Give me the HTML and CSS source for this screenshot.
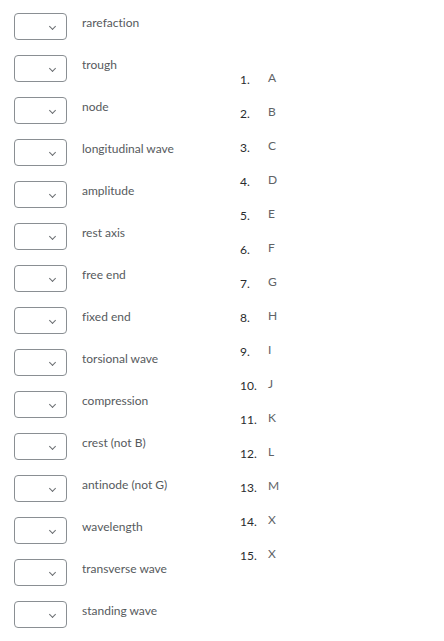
FILE: index.html
```html
<!DOCTYPE html>
<html lang="en">
<head>
<meta charset="utf-8">
<title>Matching</title>
<link rel="stylesheet" href="styles.css">
</head>
<body>
<div class="quiz">
  <div class="terms">
    <div class="row"><div class="select"><span class="chev"></span></div><span class="term">rarefaction</span></div>
    <div class="row"><div class="select"><span class="chev"></span></div><span class="term">trough</span></div>
    <div class="row"><div class="select"><span class="chev"></span></div><span class="term">node</span></div>
    <div class="row"><div class="select"><span class="chev"></span></div><span class="term">longitudinal wave</span></div>
    <div class="row"><div class="select"><span class="chev"></span></div><span class="term">amplitude</span></div>
    <div class="row"><div class="select"><span class="chev"></span></div><span class="term">rest axis</span></div>
    <div class="row"><div class="select"><span class="chev"></span></div><span class="term">free end</span></div>
    <div class="row"><div class="select"><span class="chev"></span></div><span class="term">fixed end</span></div>
    <div class="row"><div class="select"><span class="chev"></span></div><span class="term">torsional wave</span></div>
    <div class="row"><div class="select"><span class="chev"></span></div><span class="term">compression</span></div>
    <div class="row"><div class="select"><span class="chev"></span></div><span class="term">crest (not B)</span></div>
    <div class="row"><div class="select"><span class="chev"></span></div><span class="term">antinode (not G)</span></div>
    <div class="row"><div class="select"><span class="chev"></span></div><span class="term">wavelength</span></div>
    <div class="row"><div class="select"><span class="chev"></span></div><span class="term">transverse wave</span></div>
    <div class="row"><div class="select"><span class="chev"></span></div><span class="term">standing wave</span></div>
  </div>
  <ol class="choices">
    <li><span class="num">1.</span><span class="let">A</span></li>
    <li><span class="num">2.</span><span class="let">B</span></li>
    <li><span class="num">3.</span><span class="let">C</span></li>
    <li><span class="num">4.</span><span class="let">D</span></li>
    <li><span class="num">5.</span><span class="let">E</span></li>
    <li><span class="num">6.</span><span class="let">F</span></li>
    <li><span class="num">7.</span><span class="let">G</span></li>
    <li><span class="num">8.</span><span class="let">H</span></li>
    <li><span class="num">9.</span><span class="let">I</span></li>
    <li><span class="num">10.</span><span class="let">J</span></li>
    <li><span class="num">11.</span><span class="let">K</span></li>
    <li><span class="num">12.</span><span class="let">L</span></li>
    <li><span class="num">13.</span><span class="let">M</span></li>
    <li><span class="num">14.</span><span class="let">X</span></li>
    <li><span class="num">15.</span><span class="let">X</span></li>
  </ol>
</div>
</body>
</html>
```
FILE: styles.css
```css
html, body {
  margin: 0;
  padding: 0;
  background: #ffffff;
}
body {
  font-family: Lato, "Liberation Sans", sans-serif;
  font-size: 12px;
  color: #565a5d;
  font-variant-ligatures: none;
}
.quiz {
  display: flex;
  padding: 13px 0 0 14px;
}
.terms {
  width: 226px;
  display: flex;
  flex-direction: column;
  gap: 15px;
}
.row {
  display: flex;
  align-items: flex-start;
  height: 27px;
}
.select {
  position: relative;
  box-sizing: border-box;
  width: 53px;
  height: 27px;
  border: 1px solid #8a8f93;
  border-radius: 4px;
  flex: none;
}
.chev {
  position: absolute;
  left: 35px;
  top: 10px;
  width: 4px;
  height: 4px;
  border-right: 1px solid #6a6e71;
  border-bottom: 1px solid #6a6e71;
  transform: rotate(45deg);
}
.term {
  margin-left: 15px;
  line-height: 16px;
  margin-top: 2px;
}
.choices {
  list-style: none;
  margin: 0;
  padding: 59px 0 0 0;
}
.choices li {
  display: flex;
  height: 34px;
  line-height: 16px;
}
.num {
  width: 28px;
  color: #2a2c2e;
  font-size: 12px;
}
.let {
  color: #606366;
  font-size: 12px;
  position: relative;
  top: -2px;
}
```
